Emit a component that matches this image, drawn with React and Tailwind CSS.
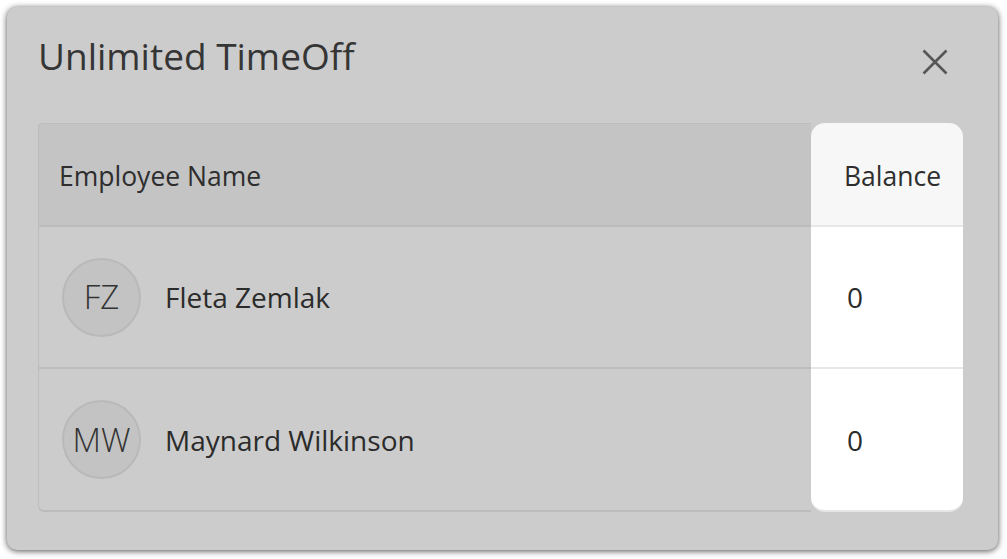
import React from 'react';

const people = [
  { initials: 'FZ', name: 'Fleta Zemlak', balance: 0 },
  { initials: 'MW', name: 'Maynard Wilkinson', balance: 0 },
];

function CloseIcon() {
  return (
    <svg width="26" height="26" viewBox="0 0 26 26" fill="none" aria-hidden>
      <path d="M1.5 1.5 L24.5 24.5 M24.5 1.5 L1.5 24.5" stroke="#565656" strokeWidth="2.6" strokeLinecap="butt" />
    </svg>
  );
}

function Avatar({ initials }) {
  return (
    <div className="flex h-[79px] w-[79px] shrink-0 items-center justify-center rounded-full border-2 border-[#b9b9b9] bg-[#c3c3c3] text-[33px] font-light text-[#333333]">
      {initials}
    </div>
  );
}

export default function App() {
  return (
    <div className="h-[559px] w-[1007px] bg-white p-[7px] font-['Open_Sans','Liberation_Sans',sans-serif]">
      <div className="h-[543px] w-[991px] rounded-[10px] bg-[#cccccc] pl-[31px] pr-[35px] pt-[24px] shadow-[0_1px_6px_rgba(0,0,0,0.7)]">
        <div className="flex items-start justify-between">
          <h2 className="text-[37px] leading-[50px] text-[#353535]">Unlimited TimeOff</h2>
          <button type="button" className="mr-[15px] mt-[18px]" aria-label="Close">
            <CloseIcon />
          </button>
        </div>

        <div className="mt-[42px] flex flex-col">
          <div className="flex">
            <div className="flex h-[104px] flex-1 items-center rounded-tl-[4px] border-l border-t border-b-2 border-[#bcbcbc] bg-[#c4c4c4] pl-[20px] pt-[5px] text-[26.5px] text-[#2e2e2e]">
              Employee Name
            </div>
            <div className="flex h-[104px] w-[152px] items-center rounded-t-[14px] border-b-2 border-[#e8e8e8] bg-[#f7f7f7] pl-[33px] pt-[6px] text-[26.5px] text-[#2e2e2e]">
              Balance
            </div>
          </div>

          {people.map((p, i) => {
            const last = i === people.length - 1;
            return (
              <div key={p.name} className="flex">
                <div
                  className={
                    last
                      ? 'flex h-[143px] flex-1 items-center gap-[24px] rounded-bl-[6px] border-l border-b-2 border-[#bcbcbc] pl-[23px]'
                      : 'flex h-[142px] flex-1 items-center gap-[24px] border-l border-b-2 border-[#bcbcbc] pl-[23px]'
                  }
                >
                  <Avatar initials={p.initials} />
                  <span className="text-[28px] font-medium text-[#2b2b2b]">{p.name}</span>
                </div>
                <div
                  className={
                    last
                      ? 'flex h-[143px] w-[152px] items-center rounded-b-[14px] border-b-2 border-[#e6e6e6] bg-white pl-[36px] text-[28px] text-[#2b2b2b]'
                      : 'flex h-[142px] w-[152px] items-center border-b-2 border-[#e8e8e8] bg-white pl-[36px] text-[28px] text-[#2b2b2b]'
                  }
                >
                  {p.balance}
                </div>
              </div>
            );
          })}
        </div>
      </div>
    </div>
  );
}
